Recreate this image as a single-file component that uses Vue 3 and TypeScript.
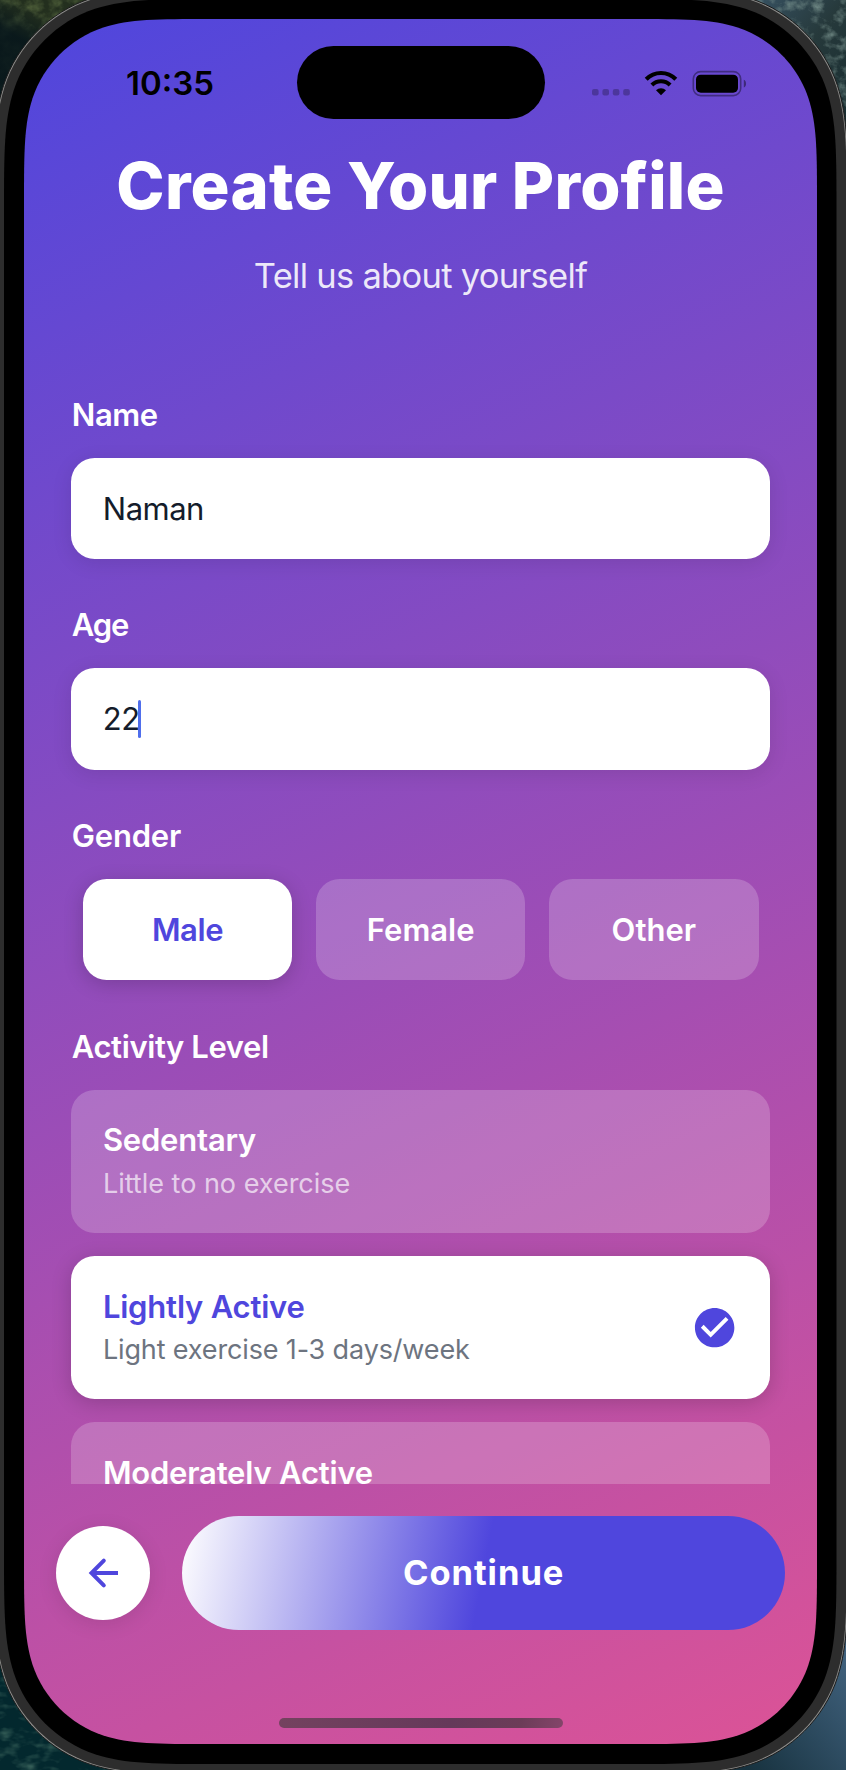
<script setup lang="ts">
import { ref } from 'vue'

interface ActivityLevel {
  id: string
  title: string
  description?: string
}

const name = ref('Naman')
const age = ref('22')
const genders = ['Male', 'Female', 'Other']
const gender = ref('Male')
const levels: ActivityLevel[] = [
  { id: 'sedentary', title: 'Sedentary', description: 'Little to no exercise' },
  { id: 'light', title: 'Lightly Active', description: 'Light exercise 1-3 days/week' },
  { id: 'moderate', title: 'Moderately Active' },
]
const level = ref('light')

/* Rounded rectangle with continuous-curvature corners. */
function squircle(x: number, y: number, w: number, h: number, r: number): string {
  const curves = [
    [1.08849, 0, 0.86841, 0, 0.65, 0.0702],
    [0.38, 0.158, 0.158, 0.38, 0.0702, 0.65],
    [0, 0.86841, 0, 1.08849, 0, 1.52866],
  ]
  const corners: Array<(a: number, b: number) => [number, number]> = [
    (a, b) => [x + w - a * r, y + b * r],
    (a, b) => [x + w - b * r, y + h - a * r],
    (a, b) => [x + a * r, y + h - b * r],
    (a, b) => [x + b * r, y + a * r],
  ]
  let d = ''
  corners.forEach((at, i) => {
    d += `${i ? 'L' : 'M'}${at(1.52866, 0).join(' ')}`
    for (const c of curves) {
      d += 'C'
      for (let k = 0; k < c.length; k += 2) d += `${at(c[k], c[k + 1]).join(' ')} `
    }
  })
  return d + 'Z'
}

const rim = squircle(-7, -12, 855, 1787, 150)
const casing = squircle(-5.7, -10.7, 852.4, 1784.4, 149)
const bezel = squircle(4, -1, 832.5, 1765, 140)
const display = squircle(24, 19, 793, 1725, 122)
</script>

<template>
  <div class="stage">
    <svg class="device" viewBox="0 0 846 1770" aria-hidden="true">
      <defs>
        <linearGradient id="bg" gradientUnits="userSpaceOnUse" x1="24" y1="19" x2="817" y2="1744">
          <stop offset="0" stop-color="#4f46dd" />
          <stop offset="1" stop-color="#dc5396" />
        </linearGradient>
        <filter id="foliage" x="0" y="0" width="100%" height="100%" color-interpolation-filters="sRGB">
          <feTurbulence type="fractalNoise" baseFrequency="0.06 0.07" numOctaves="4" seed="7" />
          <feColorMatrix values="0 0 0 0 0.36  0 0 0 0 0.43  0 0 0 0 0.26  2.4 0 0 0 -1.05" />
        </filter>
        <filter id="branches" x="0" y="0" width="100%" height="100%" color-interpolation-filters="sRGB">
          <feTurbulence type="fractalNoise" baseFrequency="0.08 0.09" numOctaves="4" seed="12" />
          <feColorMatrix values="0 0 0 0 0.48  0 0 0 0 0.58  0 0 0 0 0.56  2.4 0 0 0 -1.1" />
        </filter>
        <filter id="water" x="0" y="0" width="100%" height="100%" color-interpolation-filters="sRGB">
          <feTurbulence type="fractalNoise" baseFrequency="0.05 0.1" numOctaves="3" seed="3" />
          <feColorMatrix values="0 0 0 0 0.35  0 0 0 0 0.52  0 0 0 0 0.46  2 0 0 0 -0.95" />
        </filter>
        <linearGradient id="shade" x1="0.5" y1="0" x2="0.2" y2="0.6">
          <stop offset="0.25" stop-color="#07161b" stop-opacity="0" />
          <stop offset="0.6" stop-color="#07161b" stop-opacity="0.9" />
        </linearGradient>
        <linearGradient id="tr" x1="0" y1="0" x2="1" y2="1">
          <stop offset="0" stop-color="#3d5a70" />
          <stop offset="0.5" stop-color="#26393b" />
          <stop offset="1" stop-color="#152a2e" />
        </linearGradient>
        <linearGradient id="br" x1="0" y1="1" x2="1" y2="0.2">
          <stop offset="0.2" stop-color="#17323f" />
          <stop offset="1" stop-color="#41627e" />
        </linearGradient>
      </defs>
      <rect width="130" height="140" fill="#232f1e" />
      <rect width="130" height="140" filter="url(#foliage)" opacity="0.9" />
      <rect width="130" height="140" fill="url(#shade)" />
      <rect x="720" width="126" height="150" fill="url(#tr)" />
      <rect x="720" width="126" height="150" filter="url(#branches)" opacity="0.8" />
      <rect y="1630" width="140" height="140" fill="#03282e" />
      <rect y="1630" width="140" height="140" filter="url(#water)" opacity="0.7" />
      <rect x="700" y="1620" width="146" height="150" fill="url(#br)" />
      <path :d="rim" fill="#8b8b89" stroke="#1b1b1b" stroke-width="1" />
      <path :d="casing" fill="#2d2d2d" />
      <path :d="bezel" fill="#000" />
      <path :d="display" fill="url(#bg)" />
    </svg>

    <main class="screen">
      <div class="status">
        <span class="clock">10:35</span>
        <span class="island"></span>
        <svg class="indicators" viewBox="0 0 160 30" aria-hidden="true">
          <g fill="#000" fill-opacity="0.25">
            <rect x="3" y="21" width="6.6" height="6.6" rx="2" />
            <rect x="13.4" y="21" width="6.6" height="6.6" rx="2" />
            <rect x="23.8" y="21" width="6.6" height="6.6" rx="2" />
            <rect x="34.2" y="21" width="6.6" height="6.6" rx="2" />
          </g>
          <g fill="none" stroke="#000" stroke-width="4.1">
            <path d="M57.2 11.2a20.6 20.6 0 0 1 29.6 0" />
            <path d="M62.9 17a12.9 12.9 0 0 1 18.2 0" />
          </g>
          <path d="M72 27.3l-5-5.1a7.4 7.4 0 0 1 10 0z" fill="#000" />
          <rect x="104.3" y="3.6" width="47.4" height="24" rx="7.4" fill="none" stroke="#000" stroke-opacity="0.38" stroke-width="1.6" />
          <rect x="107" y="6.7" width="42" height="18" rx="4.8" fill="#000" />
          <path d="M154.8 11.8c3 1 3 6.8 0 7.8z" fill="#000" fill-opacity="0.42" />
        </svg>
      </div>

      <header class="header">
        <h1>Create Your Profile</h1>
        <p>Tell us about yourself</p>
      </header>

      <section class="form">
        <div class="group">
          <label>Name</label>
          <div class="field"><span>{{ name }}</span></div>
        </div>
        <div class="group">
          <label class="t-age">Age</label>
          <div class="field"><span>{{ age }}</span><i class="caret"></i></div>
        </div>
        <div class="group">
          <label class="t-gender">Gender</label>
          <div class="choices">
            <button
              v-for="g in genders"
              :key="g"
              type="button"
              class="choice"
              :class="{ selected: g === gender }"
              @click="gender = g"
            >{{ g }}</button>
          </div>
        </div>
        <div class="group">
          <label>Activity Level</label>
          <div class="levels">
            <div
              v-for="l in levels"
              :key="l.id"
              class="level"
              :class="{ selected: l.id === level }"
              @click="level = l.id"
            >
              <div class="level-text">
                <strong>{{ l.title }}</strong>
                <span v-if="l.description">{{ l.description }}</span>
              </div>
              <svg v-if="l.id === level" class="check" viewBox="0 0 24 24" aria-hidden="true">
                <path d="M12 2C6.48 2 2 6.48 2 12s4.48 10 10 10 10-4.48 10-10S17.52 2 12 2zm-2 15l-5-5 1.41-1.41L10 14.17l7.59-7.59L19 8l-9 9z" fill="#4f46dd" />
              </svg>
            </div>
          </div>
        </div>
      </section>

      <footer class="actions">
        <button type="button" class="back" aria-label="Back">
          <svg viewBox="0 0 32 32" aria-hidden="true">
            <g fill="none" stroke="#4f46dd" stroke-width="4">
              <path d="M16.8 3.7L4.5 16l12.3 12.3" stroke-linecap="round" />
              <path d="M5 16h26" />
            </g>
          </svg>
        </button>
        <button type="button" class="continue">Continue</button>
      </footer>

      <div class="home"></div>
    </main>
  </div>
</template>

<style>
body {
  margin: 0;
  background: #000;
}
</style>

<style scoped>
.stage {
  position: relative;
  width: 846px;
  height: 1770px;
  overflow: hidden;
  font-family: Inter, "Liberation Sans", sans-serif;
  color: #fff;
}
.device {
  position: absolute;
  inset: 0;
  width: 846px;
  height: 1770px;
}
.screen {
  position: relative;
  display: flex;
  flex-direction: column;
  width: 793px;
  height: 1725px;
  margin: 19px 0 0 24px;
}
.status {
  display: flex;
  align-items: center;
  height: 73px;
  margin-top: 27px;
  padding-left: 102px;
}
.clock {
  width: 171px;
  font-size: 33px;
  font-weight: 600;
  line-height: 40px;
  color: #000;
}
.island {
  width: 247.5px;
  height: 73px;
  border-radius: 37px;
  background: #000;
}
.indicators {
  width: 160px;
  height: 30px;
  margin-left: 44.5px;
}
.header {
  margin-top: 28px;
  text-align: center;
}
h1 {
  margin: 0;
  font-size: 65px;
  font-weight: 800;
  line-height: 78px;
  letter-spacing: 0.2px;
}
.header p {
  margin: 30px 0 0;
  font-size: 34.5px;
  line-height: 42px;
  letter-spacing: -0.72px;
  color: rgba(255, 255, 255, 0.88);
}
.form {
  display: flex;
  flex-direction: column;
  gap: 46.6px;
  height: 1088.7px;
  margin-top: 98.3px;
  padding: 0 46.8px 0 47.2px;
  overflow: hidden;
}
.group {
  flex: none;
}
label {
  display: block;
  margin-bottom: 23.9px;
  padding: 0.6px 0 0 0.6px;
  font-size: 31px;
  font-weight: 600;
  line-height: 38px;
  letter-spacing: -0.4px;
}
.t-age {
  letter-spacing: -1.1px;
}
.t-gender {
  letter-spacing: -0.2px;
}
.field {
  display: flex;
  align-items: center;
  box-sizing: border-box;
  height: 101.5px;
  padding: 0 31.6px;
  border-radius: 23.7px;
  background: #fff;
  box-shadow: 0 4px 20px rgba(0, 0, 0, 0.1);
  font-size: 31px;
  line-height: 38px;
  letter-spacing: -0.5px;
  color: #141c2b;
}
.caret {
  width: 3.8px;
  height: 38px;
  margin-left: -2px;
  border-radius: 2px;
  background: #4f6eec;
}
.choices {
  display: flex;
  gap: 23.6px;
  margin: 0 11.6px;
}
button {
  padding: 0;
  border: 0;
  font-family: inherit;
  color: inherit;
}
.choice {
  flex: 1;
  height: 101.5px;
  border-radius: 23.7px;
  background: rgba(255, 255, 255, 0.2);
  font-size: 31px;
  font-weight: 600;
  line-height: 38px;
}
.choice.selected {
  background: #fff;
  box-shadow: 0 4px 20px rgba(0, 0, 0, 0.18);
  letter-spacing: -0.4px;
  color: #4f46dd;
}
.levels {
  display: flex;
  flex-direction: column;
  gap: 23.3px;
}
.level {
  display: flex;
  justify-content: space-between;
  align-items: flex-start;
  box-sizing: border-box;
  height: 143px;
  padding: 31.7px;
  border-radius: 23.7px;
  background: rgba(255, 255, 255, 0.2);
}
.level-text {
  display: flex;
  flex-direction: column;
  gap: 7.6px;
}
.level strong {
  font-size: 31px;
  font-weight: 600;
  line-height: 38px;
  letter-spacing: -0.2px;
}
.level span {
  font-size: 27px;
  line-height: 34px;
  color: rgba(255, 255, 255, 0.68);
}
.level.selected {
  align-items: center;
  background: #fff;
  box-shadow: 0 4px 20px rgba(0, 0, 0, 0.18);
}
.level.selected strong {
  color: #4f46dd;
}
.level.selected span {
  letter-spacing: -0.14px;
  color: #6d7480;
}
.check {
  width: 47.3px;
  height: 47.3px;
}
.actions {
  display: flex;
  align-items: center;
  gap: 31.6px;
  margin-top: 32px;
  padding: 0 31.6px;
}
.back {
  display: flex;
  justify-content: center;
  align-items: center;
  flex: none;
  width: 94.7px;
  height: 94.7px;
  border-radius: 50%;
  background: #fff;
  box-shadow: 0 4px 20px rgba(0, 0, 0, 0.1);
}
.back svg {
  width: 32px;
  height: 32px;
}
.continue {
  flex: 1;
  height: 114px;
  border-radius: 57px;
  background: linear-gradient(100.7deg, #fff, #4f46dd 50%);
  font-size: 34.5px;
  font-weight: 700;
  letter-spacing: 0.98px;
}
.home {
  width: 284px;
  height: 10px;
  margin: auto auto 16px;
  border-radius: 5px;
  background: linear-gradient(100deg, #74425f, #65395a 60%, #6c3c58 85%, #84456a);
}
</style>
